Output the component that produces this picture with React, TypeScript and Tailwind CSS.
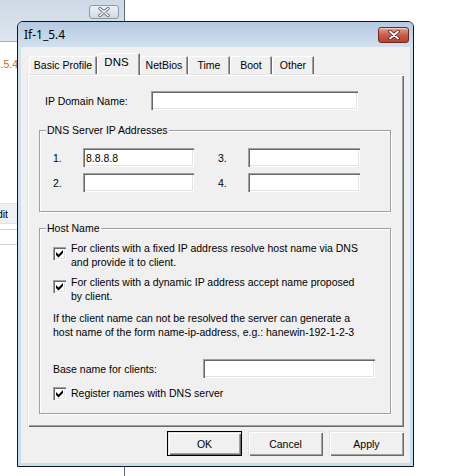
import React from "react";

const SUNKEN =
  "bg-white shadow-[inset_1px_1px_0_#a0a0a0,inset_2px_2px_0_#696969,inset_-1px_-1px_0_#ffffff,inset_-2px_-2px_0_#e3e3e3]";
const RAISED =
  "bg-[#f0f0f0] shadow-[inset_1px_1px_0_#e3e3e3,inset_2px_2px_0_#ffffff,inset_-1px_-1px_0_#696969,inset_-2px_-2px_0_#a0a0a0]";
const ETCHED =
  "relative border border-[#a0a0a0] shadow-[inset_1px_1px_0_#ffffff,1px_1px_0_#ffffff]";

function Field({ w, value }: { w: string; value?: string }) {
  return (
    <div className={`${w} h-[19px] ${SUNKEN} flex items-center pl-[3px] shrink-0`}>
      {value}
    </div>
  );
}

function Check() {
  return (
    <div className={`w-[13px] h-[13px] shrink-0 ${SUNKEN}`}>
      <svg width="13" height="13" viewBox="0 0 13 13">
        <path d="M3 5 L5.5 7.5 L10 3 L10 6 L5.5 10.5 L3 8 Z" fill="#000" />
      </svg>
    </div>
  );
}

function BgWindow() {
  return (
    <div className="absolute left-[-10px] top-[-12px] w-[135px] h-[520px] rounded-[7px] border border-[#5f6b78] bg-white overflow-hidden flex flex-col">
      <div className="h-[53px] shrink-0 bg-gradient-to-b from-[#c9d6e4] to-[#dde6ef] border-b border-[#a7b0ba] flex justify-end items-start pt-[16px] pr-[5px]">
        <div className="w-[30px] h-[14px] rounded-[3px] border border-[#8e99a6] bg-gradient-to-b from-[#eef2f6] to-[#d0d9e3] flex items-center justify-center">
          <svg width="12" height="10" viewBox="0 0 12 10">
            <path d="M2 1.5 L10 8.5 M10 1.5 L2 8.5" stroke="#6c7682" strokeWidth="3.4" strokeLinecap="round" />
            <path d="M2 1.5 L10 8.5 M10 1.5 L2 8.5" stroke="#ffffff" strokeWidth="1.6" strokeLinecap="round" />
          </svg>
        </div>
      </div>
      <div className="mt-[15px] w-[27px] h-[14px] flex justify-end overflow-hidden whitespace-nowrap text-[#b8730a]">
        <span>192.1.5.4</span>
      </div>
      <div className="mt-[132px] h-[21px] bg-[#f0f0f0] border-t border-[#e3e3e3] border-b border-[#a0a0a0] flex items-center">
        <div className="w-[17px] flex justify-end overflow-hidden whitespace-nowrap">
          <span>Edit</span>
        </div>
      </div>
      <div className="mt-[5px] h-px bg-[#d0d0d0]" />
      <div className="mt-[14px] h-px bg-[#d0d0d0]" />
    </div>
  );
}

function CloseButton() {
  return (
    <div className="mt-[5px] mr-[4px] w-[31px] h-[16px] rounded-[3px] border border-[#6e2a22] bg-gradient-to-b from-[#e2a497] via-[#c95a4b] to-[#b9422f] flex items-center justify-center shadow-[inset_0_1px_0_#f3c9bf]">
      <svg width="14" height="10" viewBox="0 0 14 10">
        <path d="M3 1.5 L11 8.5 M11 1.5 L3 8.5" stroke="#5a1e18" strokeWidth="3.6" strokeLinecap="round" />
        <path d="M3 1.5 L11 8.5 M11 1.5 L3 8.5" stroke="#ffffff" strokeWidth="1.8" strokeLinecap="round" />
      </svg>
    </div>
  );
}

const TABS = [
  { label: "Basic Profile", w: "w-[68px]" },
  { label: "DNS", w: "w-[43px]", active: true },
  { label: "NetBios", w: "w-[48px]" },
  { label: "Time", w: "w-[42px]" },
  { label: "Boot", w: "w-[42px]" },
  { label: "Other", w: "w-[42px]" },
];

function Tabs() {
  return (
    <div className="flex items-end pl-[8px] h-[21px]">
      {TABS.map((t) =>
        t.active ? (
          <div
            key={t.label}
            className={`${t.w} h-[22px] -mb-px relative z-10 bg-[#f0f0f0] rounded-t-[2px] shadow-[inset_1px_1px_0_#ffffff,inset_-1px_0_0_#696969,inset_-2px_0_0_#a0a0a0] flex items-center justify-center pr-[4px] pb-[4px] text-[11.5px]`}
          >
            {t.label}
          </div>
        ) : (
          <div
            key={t.label}
            className={`${t.w} h-[18px] bg-[#f0f0f0] rounded-t-[2px] shadow-[inset_1px_1px_0_#ffffff,inset_-1px_0_0_#696969,inset_-2px_0_0_#a0a0a0] flex items-center justify-center`}
          >
            {t.label}
          </div>
        )
      )}
    </div>
  );
}

function Panel() {
  return (
    <div className={`ml-[6px] w-[377px] h-[353px] shrink-0 ${RAISED} flex flex-col pt-[17px]`}>
      <div className="flex items-center pl-[18px] h-[19px]">
        <span className="w-[106px]">IP Domain Name:</span>
        <Field w="w-[207px]" />
      </div>

      <div className={`mt-[20px] ml-[12px] w-[352px] h-[82px] shrink-0 ${ETCHED}`}>
        <span className="absolute left-[6px] top-[-8px] px-[1px] bg-[#f0f0f0] whitespace-nowrap">
          DNS Server IP Addresses
        </span>
        <div className="flex flex-col gap-[6px] pt-[17px] pl-[13px]">
          <div className="flex items-center">
            <span className="w-[30px]">1.</span>
            <Field w="w-[111px]" value="8.8.8.8" />
            <span className="w-[24px]" />
            <span className="w-[30px]">3.</span>
            <Field w="w-[112px]" />
          </div>
          <div className="flex items-center">
            <span className="w-[30px]">2.</span>
            <Field w="w-[111px]" />
            <span className="w-[24px]" />
            <span className="w-[30px]">4.</span>
            <Field w="w-[112px]" />
          </div>
        </div>
      </div>

      <div className={`mt-[16px] ml-[12px] w-[352px] h-[186px] shrink-0 ${ETCHED}`}>
        <span className="absolute left-[6px] top-[-8px] px-[1px] bg-[#f0f0f0] whitespace-nowrap">
          Host Name
        </span>
        <div className="flex flex-col pt-[12px] pl-[13px] whitespace-nowrap">
          <div className="flex items-start">
            <div className="mt-[6px]">
              <Check />
            </div>
            <div className="ml-[5px]">
              For clients with a fixed IP address resolve host name via DNS
              <br />
              and provide it to client.
            </div>
          </div>
          <div className="flex items-start mt-[6px]">
            <div className="mt-[5px]">
              <Check />
            </div>
            <div className="ml-[5px]">
              For clients with a dynamic IP address accept name proposed
              <br />
              by client.
            </div>
          </div>
          <div className="mt-[8px]">
            If the client name can not be resolved the server can generate a
            <br />
            host name of the form name-ip-address, e.g.: hanewin-192-1-2-3
          </div>
          <div className="mt-[20px] flex items-center h-[19px]">
            <span className="w-[150px]">Base name for clients:</span>
            <Field w="w-[172px]" />
          </div>
          <div className="mt-[8px] flex items-center h-[14px]">
            <Check />
            <span className="ml-[5px]">Register names with DNS server</span>
          </div>
        </div>
      </div>
    </div>
  );
}

function Buttons() {
  return (
    <div className="mt-[4px] flex justify-end gap-[6px] pr-[6px]">
      <div className="w-[75px] h-[25px] border border-black">
        <div className={`w-full h-full ${RAISED} flex items-center justify-center`}>OK</div>
      </div>
      <div className={`w-[75px] h-[25px] ${RAISED} flex items-center justify-center`}>Cancel</div>
      <div className={`w-[75px] h-[25px] ${RAISED} flex items-center justify-center`}>Apply</div>
    </div>
  );
}

function Dialog() {
  return (
    <div className="absolute left-[17px] top-[21px] w-[397px] h-[446px] border border-[#141414] rounded-t-[6px] overflow-hidden flex flex-col bg-[#c3dff4]">
      <div className="h-[25px] shrink-0 bg-gradient-to-b from-[#b4c9e1] to-[#d3e0ee] flex items-start justify-between">
        <span className="pl-[6px] mt-[5px] font-['Noto_Sans',sans-serif] text-[12px] leading-[16px]">If-1_5.4</span>
        <CloseButton />
      </div>
      <div className="flex-1 flex flex-col px-[3px] pb-[3px] bg-gradient-to-b from-[#d3e0ee] to-[#c3dff4]">
        <div className="flex-1 bg-[#f0f0f0] flex flex-col pt-[6px]">
          <Tabs />
          <Panel />
          <Buttons />
        </div>
      </div>
    </div>
  );
}

export default function App() {
  return (
    <div className="relative w-[454px] h-[476px] bg-white overflow-hidden font-['Liberation_Sans',Arial,sans-serif] text-[10.5px] leading-[14px] text-black">
      <BgWindow />
      <Dialog />
    </div>
  );
}
